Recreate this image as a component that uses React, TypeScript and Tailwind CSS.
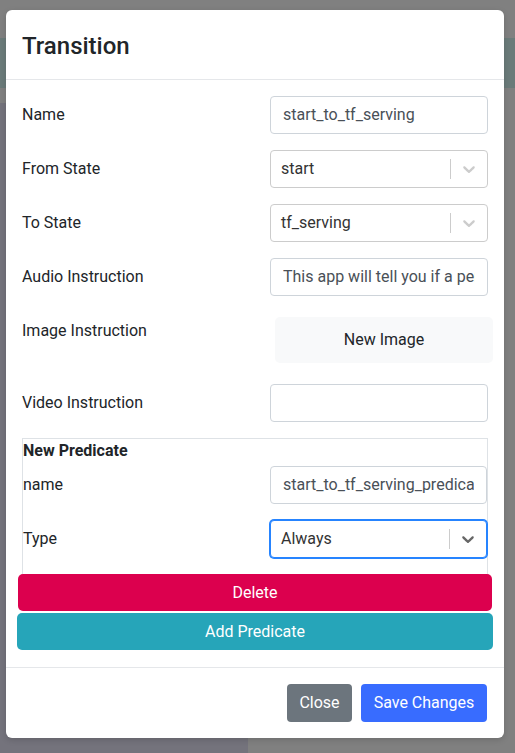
import React from "react";

function Chevron({ dark }: { dark?: boolean }) {
  return (
    <svg width="20" height="20" viewBox="0 0 20 20" className={dark ? "text-[#666666]" : "text-[#cccccc]"} fill="currentColor">
      <path d="M4.516 7.548c0.436-0.446 1.043-0.481 1.576 0l3.908 3.747 3.908-3.747c0.533-0.481 1.141-0.446 1.574 0 0.436 0.445 0.408 1.197 0 1.615-0.406 0.418-4.695 4.502-4.695 4.502-0.217 0.223-0.502 0.335-0.787 0.335s-0.57-0.112-0.789-0.335c0 0-4.287-4.084-4.695-4.502s-0.436-1.17 0-1.615z" />
    </svg>
  );
}

function TextInput({ value }: { value: string }) {
  return (
    <div className="h-[38px] w-full rounded-[4px] border border-[#ced4da] bg-white px-3 flex items-center text-[16px] text-[#495057]">
      <div className="flex-1 min-w-0 overflow-hidden whitespace-nowrap">{value}</div>
    </div>
  );
}

function Select({ value, focused }: { value: string; focused?: boolean }) {
  return (
    <div
      className={
        focused
          ? "h-[38px] w-full rounded-[4px] border border-[#2684ff] shadow-[0_0_0_1px_#2684ff] bg-white flex items-center"
          : "h-[38px] w-full rounded-[4px] border border-[#cccccc] bg-white flex items-center"
      }
    >
      <div className="flex-1 pl-[10px] text-[16px] text-[#333333] whitespace-nowrap overflow-hidden">{value}</div>
      <div className="w-px h-[20px] bg-[#cccccc]" />
      <div className="px-2 flex items-center">
        <Chevron dark={focused} />
      </div>
    </div>
  );
}

function Row({ label, children, inner }: { label: string; children: React.ReactNode; inner?: boolean }) {
  return (
    <div className="flex items-center min-h-[38px]">
      <div className={inner ? "w-[247px] shrink-0 text-[16px] leading-6 text-[#212529]" : "w-[248px] shrink-0 text-[16px] leading-6 text-[#212529]"}>
        {label}
      </div>
      <div className="flex-1 min-w-0">{children}</div>
    </div>
  );
}

export default function App() {
  return (
    <div className="relative w-[515px] h-[753px] overflow-hidden bg-[#808080]" style={{ fontFamily: "Roboto, 'Noto Sans', sans-serif" }}>
      {/* underlying page seen through the overlay */}
      <div className="flex flex-col h-full">
        <div className="h-[38px]" />
        <div className="h-[50px] bg-[#6b7b7a]" />
        <div className="h-[15px]" />
        <div className="flex flex-1">
          <div className="w-[248px] bg-[#74737c]" />
          <div className="flex-1" />
        </div>
      </div>

      {/* modal */}
      <div className="absolute left-[6px] top-[10px] w-[498px] h-[728px] rounded-[6px] bg-white shadow-[0_2px_6px_rgba(0,0,0,0.15)] flex flex-col">
        <div className="h-[70px] border-b border-[#e5e7ea] px-4 flex items-center">
          <div className="text-[24px] font-medium text-[#212529] leading-none pt-[2px]">Transition</div>
        </div>

        <div className="px-4 pt-4 pb-[17px] flex flex-col">
          <div className="flex flex-col gap-4">
            <Row label="Name">
              <TextInput value="start_to_tf_serving" />
            </Row>
            <Row label="From State">
              <Select value="start" />
            </Row>
            <Row label="To State">
              <Select value="tf_serving" />
            </Row>
            <Row label="Audio Instruction">
              <TextInput value="This app will tell you if a person is wearing a mask" />
            </Row>
          </div>

          <div className="flex items-start mt-[16px]">
            <div className="w-[248px] shrink-0 pt-[7px] text-[16px] leading-6 text-[#212529]">Image Instruction</div>
            <div className="flex-1">
              <div className="ml-[5px] mr-[-5px] mt-[5px] mb-[5px] h-[46px] rounded-[5px] bg-[#f8f9fa] flex items-center justify-center text-[16px] text-[#212529]">
                New Image
              </div>
            </div>
          </div>

          <div className="mt-[16px]">
            <Row label="Video Instruction">
              <TextInput value="" />
            </Row>
          </div>

          <div className="mt-[16px] border border-[#dee2e6] border-b-0 h-[136px]">
            <div className="text-[16px] font-bold leading-6 text-[#212529] mb-[3px]">New Predicate</div>
            <div className="flex flex-col gap-4">
              <Row label="name" inner>
                <TextInput value="start_to_tf_serving_predicate" />
              </Row>
              <Row label="Type" inner>
                <Select value="Always" focused />
              </Row>
            </div>
          </div>

          <div className="mx-[-4px] h-[37px] rounded-[5px] bg-[#dc004e] text-white text-[16px] flex items-center justify-center">
            Delete
          </div>
          <div className="mx-[-5px] mt-[2px] h-[37px] rounded-[5px] bg-[#26a5b9] text-white text-[16px] flex items-center justify-center">
            Add Predicate
          </div>
        </div>

        <div className="border-t border-[#e5e7ea] pl-4 pr-[17px] pt-4 flex justify-end gap-[9px]">
          <div className="h-[38px] w-[65px] rounded-[4px] bg-[#6c757d] text-white text-[16px] flex items-center justify-center">Close</div>
          <div className="h-[38px] w-[126px] rounded-[4px] bg-[#386cff] text-white text-[16px] flex items-center justify-center">Save Changes</div>
        </div>
      </div>
    </div>
  );
}
